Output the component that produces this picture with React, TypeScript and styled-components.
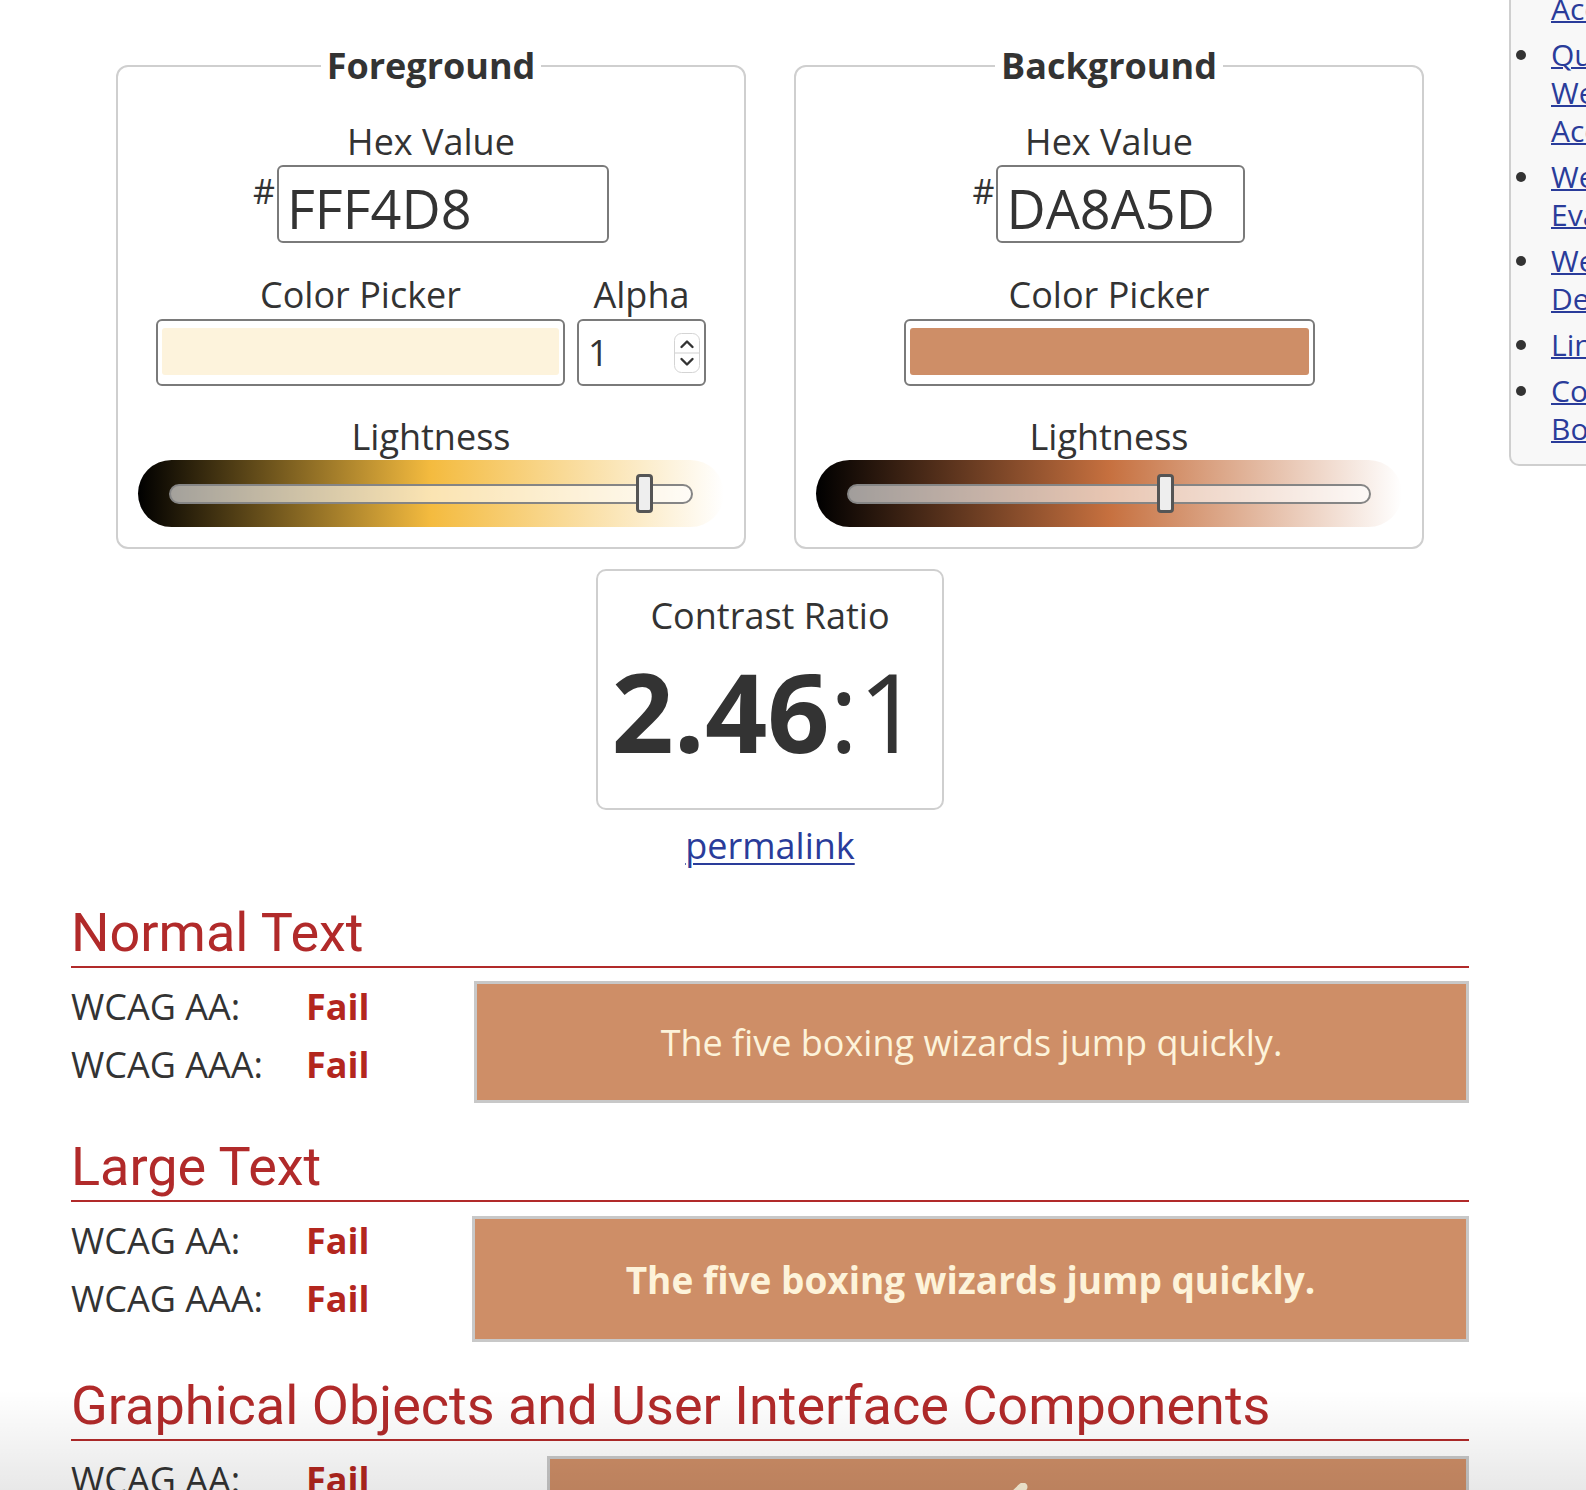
import React from "react";
import styled, { createGlobalStyle } from "styled-components";

const GlobalStyle = createGlobalStyle`
  html, body { margin: 0; padding: 0; background: #fff; }
  body {
    overflow: hidden;
    font-family: "Open Sans", "Liberation Sans", sans-serif;
    color: #333;
  }
  * { box-sizing: border-box; }
`;

const Page = styled.div`
  position: relative;
  display: flex;
  align-items: flex-start;
  width: 1586px;
  height: 1490px;
  overflow: hidden;
  &::after {
    content: "";
    position: absolute;
    left: 0;
    right: 0;
    bottom: 0;
    height: 100px;
    background: linear-gradient(rgba(0, 0, 0, 0), rgba(0, 0, 0, 0.09));
    pointer-events: none;
  }
`;

const Main = styled.main`
  flex: none;
  width: 1398px;
  margin-left: 71px;
  padding-top: 43px;
  display: flex;
  flex-direction: column;
  align-items: center;
`;

const PanelRow = styled.div`
  display: flex;
  justify-content: center;
  gap: 48px;
`;

const Panel = styled.fieldset`
  width: 630px;
  min-width: 0;
  margin: 0;
  border: 2px solid #cfcfcf;
  border-radius: 12px;
  padding: 30px 20px 20px;
  display: flex;
  flex-direction: column;
  align-items: center;
`;

const Legend = styled.legend`
  margin: 0 auto;
  padding: 0 6px;
  font-size: 36px;
  line-height: 46px;
  font-weight: 700;
  color: #333;
`;

const FieldLabel = styled.div<{ $mt?: number; $lh?: number }>`
  margin-top: ${(p) => p.$mt ?? 0}px;
  font-size: 36px;
  line-height: ${(p) => p.$lh ?? 46}px;
  text-align: center;
  white-space: nowrap;
`;

const HexRow = styled.div`
  display: flex;
  align-items: flex-start;
  gap: 2px;
`;

const Hash = styled.span`
  margin-top: 10px;
  font-size: 34px;
  line-height: 32px;
`;

const HexInput = styled.input<{ $w: number }>`
  width: ${(p) => p.$w}px;
  height: 78px;
  margin: 0;
  border: 2px solid #7a7a7a;
  border-radius: 6px;
  padding: 8px 8px 0;
  background: #fff;
  font: inherit;
  font-size: 54px;
  color: #333;
  outline: none;
`;

const PickerRow = styled.div`
  display: flex;
  align-items: flex-end;
  gap: 12px;
  margin-top: 28px;
`;

const PickerCol = styled.div`
  display: flex;
  flex-direction: column;
  align-items: center;
`;

const Swatch = styled.div<{ $w: number }>`
  width: ${(p) => p.$w}px;
  height: 67px;
  border: 2px solid #7a7a7a;
  border-radius: 6px;
  padding: 7px 4px 9px;
  background: #fff;
`;

const SwatchFill = styled.div<{ $color: string }>`
  height: 100%;
  border-radius: 3px;
  background: ${(p) => p.$color};
`;

const AlphaBox = styled.div`
  width: 129px;
  height: 67px;
  border: 2px solid #7a7a7a;
  border-radius: 6px;
  padding: 0 4px 0 9px;
  display: flex;
  align-items: center;
  justify-content: space-between;
  font-size: 36px;
  background: #fff;
`;

const LightPill = styled.div<{ $grad: string }>`
  width: 100%;
  height: 67px;
  border-radius: 34px;
  padding: 0 31px;
  display: flex;
  align-items: center;
  background: ${(p) => p.$grad};
`;

const Rail = styled.div`
  position: relative;
  flex: 1;
  height: 20px;
  border: 2px solid #858585;
  border-radius: 10px;
  background: rgba(255, 255, 255, 0.6);
`;

const Thumb = styled.div`
  position: absolute;
  top: 50%;
  width: 17px;
  height: 39px;
  margin-top: -19.5px;
  border: 3px solid #555;
  border-radius: 4px;
  background: #eee;
`;

const RatioCard = styled.div`
  width: 348px;
  margin-top: 20px;
  border: 2px solid #cfcfcf;
  border-radius: 10px;
  padding: 21px 0 39px;
  text-align: center;
`;

const RatioLabel = styled.div`
  font-size: 36px;
  line-height: 48px;
`;

const RatioValue = styled.div`
  margin-top: 13px;
  padding-right: 8px;
  font-size: 109px;
  line-height: 116px;
  font-weight: 700;
  white-space: nowrap;
`;

const RatioRest = styled.span`
  font-weight: 400;
`;

const Permalink = styled.a`
  margin-top: 12px;
  font-size: 36px;
  line-height: 48px;
  color: #2a3c9a;
  text-decoration: underline;
  text-decoration-thickness: 2px;
  text-underline-offset: 4px;
`;

const Section = styled.section<{ $mt: number }>`
  align-self: stretch;
  margin-top: ${(p) => p.$mt}px;
`;

const SectionTitle = styled.h2`
  margin: 0;
  font-family: Roboto, "Liberation Sans", sans-serif;
  font-stretch: 94%;
  font-weight: 400;
  font-size: 54px;
  line-height: 67px;
  color: #b12a2a;
  border-bottom: 2px solid #b12a2a;
  white-space: nowrap;
`;

const ResultRow = styled.div<{ $left: number }>`
  display: grid;
  grid-template-columns: ${(p) => p.$left}px 1fr;
  align-items: start;
  margin-top: 10px;
`;

const Checks = styled.div`
  display: grid;
  grid-template-columns: 235px auto;
  font-size: 36px;
  line-height: 58px;
  white-space: nowrap;
`;

const Fail = styled.span`
  font-weight: 700;
  color: #b3261e;
`;

const Sample = styled.div<{ $h: number; $mt: number; $bold?: boolean }>`
  margin-top: ${(p) => p.$mt}px;
  height: ${(p) => p.$h}px;
  border: 3px solid #c8c8c8;
  background: #ce8e67;
  color: #fdf3da;
  display: flex;
  align-items: center;
  justify-content: center;
  font-size: ${(p) => (p.$bold ? 37 : 36)}px;
  font-weight: ${(p) => (p.$bold ? 700 : 400)};
  white-space: nowrap;
`;

const GraphicSample = styled(Sample)`
  align-items: flex-start;
  padding-top: 24px;
`;

const CheckSvg = styled.svg`
  flex: none;
  margin-right: 28px;
`;

const Sidebar = styled.aside`
  flex: none;
  width: 320px;
  margin-left: 40px;
  margin-top: -48px;
  padding: 0 0 16px 5px;
  background: #f8f8f8;
  border-left: 2px solid #cfcfcf;
  border-bottom: 2px solid #cfcfcf;
  border-bottom-left-radius: 10px;
`;

const LinkList = styled.ul`
  margin: 0;
  padding: 0;
  list-style: none;
  display: flex;
  flex-direction: column;
  gap: 8px;
`;

const LinkItem = styled.li`
  display: flex;
  align-items: flex-start;
  gap: 25px;
`;

const Bullet = styled.span`
  flex: none;
  width: 10px;
  height: 10px;
  margin-top: 14px;
  border-radius: 50%;
  background: #333;
`;

const SideLink = styled.a`
  font-size: 30px;
  line-height: 38px;
  color: #2a3c9a;
  text-decoration: underline;
  text-decoration-thickness: 2px;
`;

const Line = styled.span`
  display: block;
  white-space: nowrap;
`;

const Spinner = () => (
  <svg width="26" height="40" viewBox="0 0 26 40" aria-hidden="true">
    <rect x="0.5" y="0.5" width="25" height="39" rx="7" fill="#fff" stroke="#d4d4d4" />
    <line x1="1" y1="20" x2="25" y2="20" stroke="#cfcfcf" />
    <path d="M7.5 14 L13 8.5 L18.5 14" fill="none" stroke="#333" strokeWidth="2.4" strokeLinecap="round" strokeLinejoin="round" />
    <path d="M7.5 26 L13 31.5 L18.5 26" fill="none" stroke="#333" strokeWidth="2.4" strokeLinecap="round" strokeLinejoin="round" />
  </svg>
);

const CheckIcon = () => (
  <CheckSvg width="70" height="60" viewBox="0 0 70 60" aria-hidden="true">
    <path d="M6 34 C14 40 20 46 26 54 C36 34 48 18 64 4" fill="none" stroke="#fdf3da" strokeWidth="9" strokeLinecap="round" strokeLinejoin="round" />
  </CheckSvg>
);

type PanelData = {
  title: string;
  hex: string;
  hexWidth: number;
  pickerWidth: number;
  swatch: string;
  alpha?: string;
  lightness: number;
  gradient: string;
};

const panels: PanelData[] = [
  {
    title: "Foreground",
    hex: "FFF4D8",
    hexWidth: 332,
    pickerWidth: 409,
    swatch: "#fdf3dc",
    alpha: "1",
    lightness: 0.924,
    gradient: "linear-gradient(to right, #000 0%, #f4bb3f 50%, #fff 100%)",
  },
  {
    title: "Background",
    hex: "DA8A5D",
    hexWidth: 249,
    pickerWidth: 411,
    swatch: "#ce8e67",
    lightness: 0.612,
    gradient: "linear-gradient(to right, #000 0%, #c6703f 50%, #fff 100%)",
  },
];

const ColorPanel = ({ data }: { data: PanelData }) => (
  <Panel>
    <Legend>{data.title}</Legend>
    <FieldLabel>Hex Value</FieldLabel>
    <HexRow>
      <Hash>#</Hash>
      <HexInput $w={data.hexWidth} value={data.hex} readOnly />
    </HexRow>
    <PickerRow>
      <PickerCol>
        <FieldLabel $lh={48}>Color Picker</FieldLabel>
        <Swatch $w={data.pickerWidth}>
          <SwatchFill $color={data.swatch} />
        </Swatch>
      </PickerCol>
      {data.alpha && (
        <PickerCol>
          <FieldLabel $lh={48}>Alpha</FieldLabel>
          <AlphaBox>
            <span>{data.alpha}</span>
            <Spinner />
          </AlphaBox>
        </PickerCol>
      )}
    </PickerRow>
    <FieldLabel $mt={28}>Lightness</FieldLabel>
    <LightPill $grad={data.gradient}>
      <Rail>
        <Thumb style={{ left: `calc(${data.lightness * 100}% - ${data.lightness * 17}px)` }} />
      </Rail>
    </LightPill>
  </Panel>
);

const CheckList = ({ levels }: { levels: string[] }) => (
  <Checks>
    {levels.map((l) => (
      <React.Fragment key={l}>
        <span>{l}</span>
        <Fail>Fail</Fail>
      </React.Fragment>
    ))}
  </Checks>
);

const sideLinks: string[][] = [
  ["Contrast and Color", "Accessibility"],
  ["Quick Reference:", "Web", "Accessibility Principles"],
  ["Web Accessibility", "Evaluation Tool"],
  ["Web Accessibility for", "Designers"],
  ["Link Contrast Checker"],
  ["Contrast Checker", "Bookmarklet"],
];

export default function App() {
  const sample = "The five boxing wizards jump quickly.";
  return (
    <>
      <GlobalStyle />
      <Page>
        <Main>
          <PanelRow>
            {panels.map((p) => (
              <ColorPanel key={p.title} data={p} />
            ))}
          </PanelRow>

          <RatioCard>
            <RatioLabel>Contrast Ratio</RatioLabel>
            <RatioValue>
              2.46<RatioRest>:1</RatioRest>
            </RatioValue>
          </RatioCard>
          <Permalink href="#">permalink</Permalink>

          <Section $mt={29}>
            <SectionTitle>Normal Text</SectionTitle>
            <ResultRow $left={403}>
              <CheckList levels={["WCAG AA:", "WCAG AAA:"]} />
              <Sample $h={122} $mt={3}>{sample}</Sample>
            </ResultRow>
          </Section>

          <Section $mt={30}>
            <SectionTitle>Large Text</SectionTitle>
            <ResultRow $left={401}>
              <CheckList levels={["WCAG AA:", "WCAG AAA:"]} />
              <Sample $h={126} $mt={4} $bold>{sample}</Sample>
            </ResultRow>
          </Section>

          <Section $mt={30}>
            <SectionTitle>Graphical Objects and User Interface Components</SectionTitle>
            <ResultRow $left={476}>
              <CheckList levels={["WCAG AA:"]} />
              <GraphicSample $h={140} $mt={5}>
                <CheckIcon />
              </GraphicSample>
            </ResultRow>
          </Section>
        </Main>

        <Sidebar>
          <LinkList>
            {sideLinks.map((lines, i) => (
              <LinkItem key={i}>
                <Bullet />
                <SideLink href="#">
                  {lines.map((t) => (
                    <Line key={t}>{t}</Line>
                  ))}
                </SideLink>
              </LinkItem>
            ))}
          </LinkList>
        </Sidebar>
      </Page>
    </>
  );
}
